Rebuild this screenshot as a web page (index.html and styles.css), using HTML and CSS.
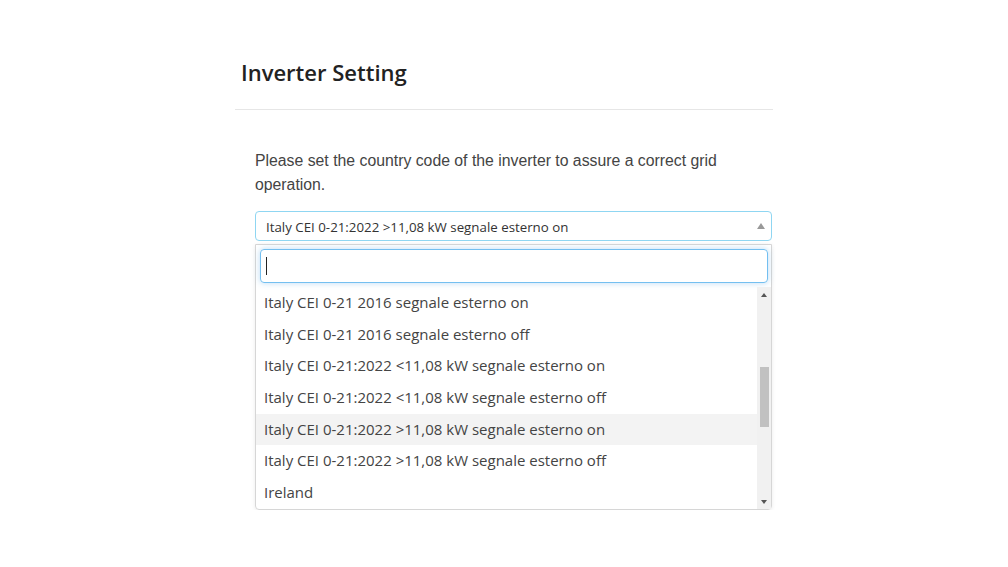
FILE: index.html
```html
<!DOCTYPE html>
<html>
<head>
<meta charset="utf-8">
<link rel="stylesheet" href="styles.css">
</head>
<body>
<div class="panel">
  <div class="panel-header">
    <h2 class="title">Inverter Setting</h2>
  </div>
  <div class="panel-body">
    <p class="intro">Please set the country code of the inverter to assure a correct grid operation.</p>
    <div class="select">
      <span class="select-value">Italy CEI 0-21:2022 &gt;11,08 kW segnale esterno on</span>
      <span class="select-arrow"></span>
    </div>
    <div class="dropdown">
      <div class="search"><span class="caret"></span></div>
      <div class="results">
        <ul class="options">
          <li class="option">Italy CEI 0-21 2016 segnale esterno on</li>
          <li class="option">Italy CEI 0-21 2016 segnale esterno off</li>
          <li class="option">Italy CEI 0-21:2022 &lt;11,08 kW segnale esterno on</li>
          <li class="option">Italy CEI 0-21:2022 &lt;11,08 kW segnale esterno off</li>
          <li class="option active">Italy CEI 0-21:2022 &gt;11,08 kW segnale esterno on</li>
          <li class="option">Italy CEI 0-21:2022 &gt;11,08 kW segnale esterno off</li>
          <li class="option">Ireland</li>
        </ul>
        <div class="scrollbar">
          <span class="sb-up"></span>
          <div class="sb-track"><div class="sb-thumb"></div></div>
          <span class="sb-down"></span>
        </div>
      </div>
    </div>
  </div>
</div>
</body>
</html>
```

FILE: styles.css
```css
html, body {
  margin: 0;
  padding: 0;
  background: #ffffff;
}

.panel {
  width: 538px;
  margin: 0 auto;
  padding-top: 56px;
}

.panel-header {
  border-bottom: 1px solid #e6e6e6;
  padding: 0 6px 20px;
}

.title {
  margin: 0;
  font-family: "Open Sans", "Noto Sans", sans-serif;
  font-weight: 600;
  font-size: 22px;
  line-height: 33px;
  color: #222;
  letter-spacing: 0;
}

.panel-body {
  padding: 39px 1px 0 20px;
}

.intro {
  margin: 0 0 14px;
  font-family: "Liberation Sans", Arial, sans-serif;
  font-size: 15.8px;
  line-height: 24px;
  color: #444;
  width: 480px;
}

.select {
  box-sizing: border-box;
  height: 30px;
  border: 1px solid #8fd6f2;
  border-radius: 4px;
  display: flex;
  align-items: center;
  justify-content: space-between;
  padding: 0 6px 0 10px;
  font-family: "Open Sans", "Noto Sans", sans-serif;
  font-size: 13.3px;
  color: #333;
  letter-spacing: 0;
}

.select-value {
  padding-top: 1px;
}

.select-arrow {
  width: 0;
  height: 0;
  border-left: 4px solid transparent;
  border-right: 4px solid transparent;
  border-bottom: 6px solid #999;
  margin-top: -1px;
}

.dropdown {
  margin-top: 3px;
  box-sizing: border-box;
  border: 1px solid #d6d6d6;
  border-radius: 0 0 4px 4px;
  box-shadow: 0 1px 4px rgba(0,0,0,0.08);
  padding: 4px 0 0;
}

.search {
  box-sizing: border-box;
  height: 34px;
  margin: 0 3px 4px 4px;
  border: 1px solid #73bff0;
  border-radius: 4px;
  box-shadow: 0 0 6px rgba(102,175,233,0.45);
  display: flex;
  align-items: center;
  padding-left: 5px;
}

.caret {
  width: 1px;
  height: 18px;
  background: #222;
}

.results {
  display: flex;
  height: 222px;
}

.options {
  list-style: none;
  margin: 0;
  padding: 0;
  flex: 1;
  overflow: hidden;
}

.option {
  height: 31.7px;
  line-height: 31.7px;
  padding-left: 8px;
  font-family: "Open Sans", "Noto Sans", sans-serif;
  font-size: 15px;
  color: #444;
  letter-spacing: 0;
  white-space: nowrap;
}

.option.active {
  background: #f3f3f3;
}

.scrollbar {
  width: 14px;
  background: #f1f1f1;
  display: flex;
  flex-direction: column;
  align-items: center;
}

.sb-up, .sb-down {
  height: 15px;
  display: flex;
  align-items: center;
  justify-content: center;
}

.sb-up::before {
  content: "";
  border-left: 3px solid transparent;
  border-right: 3px solid transparent;
  border-bottom: 4px solid #555;
}

.sb-down::before {
  content: "";
  border-left: 3px solid transparent;
  border-right: 3px solid transparent;
  border-top: 4px solid #555;
}

.sb-track {
  flex: 1;
  width: 100%;
  display: flex;
  justify-content: center;
  padding-top: 65px;
  box-sizing: border-box;
}

.sb-thumb {
  width: 9px;
  height: 60px;
  background: #c1c1c1;
}
```
